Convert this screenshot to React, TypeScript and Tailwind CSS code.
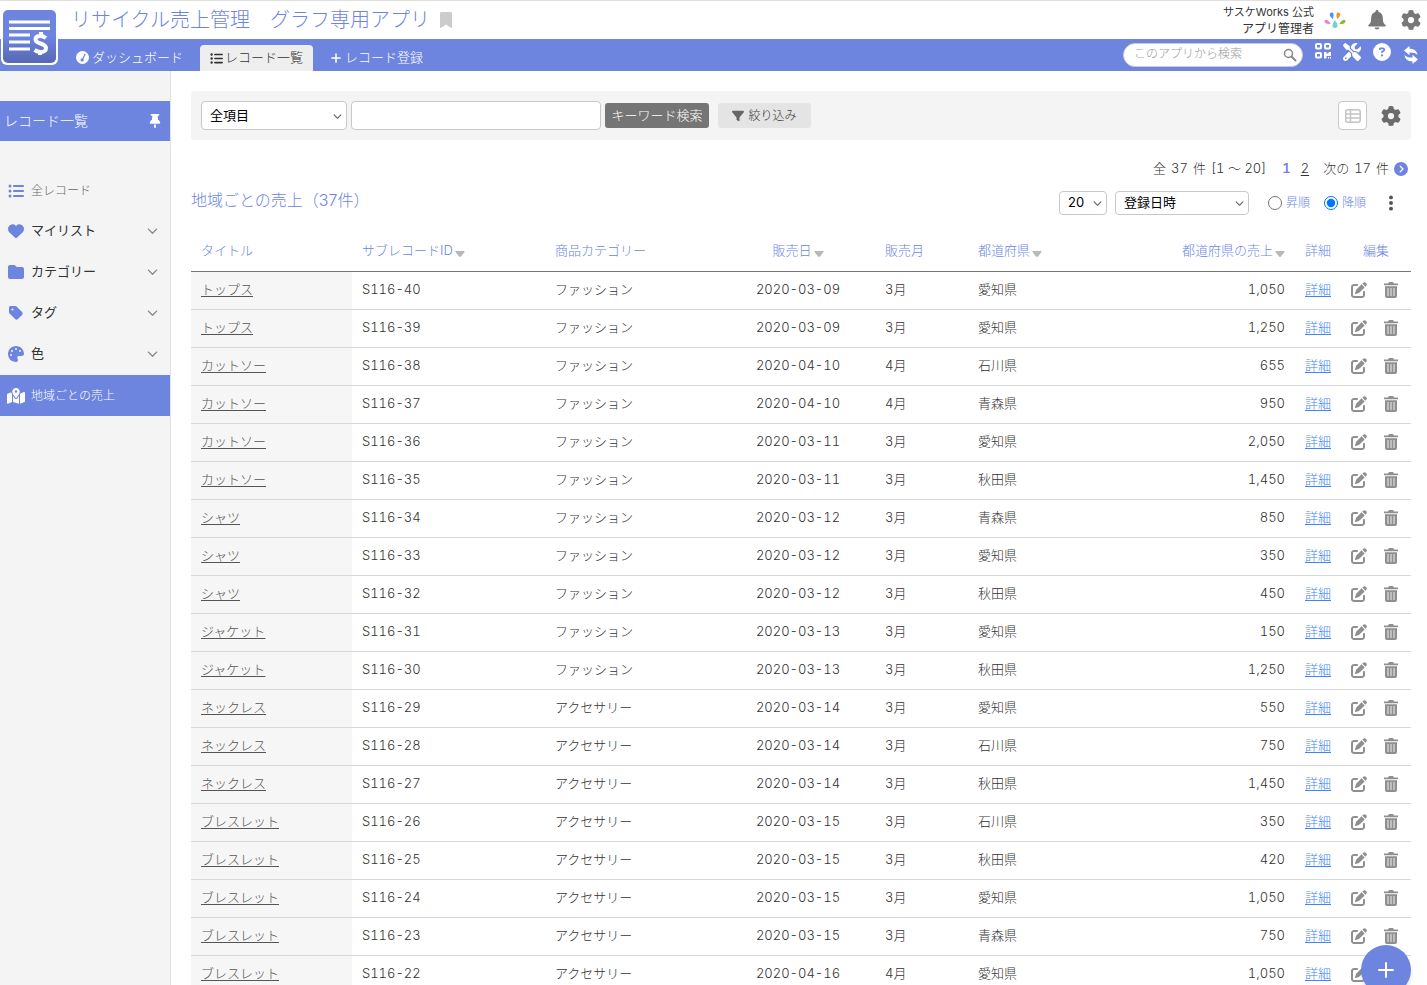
import type { ReactNode } from "react";
import {
  FaBookmark,
  FaChevronDown,
  FaCircleChevronRight,
  FaCircleQuestion,
  FaEllipsisVertical,
  FaFilter,
  FaFolder,
  FaGear,
  FaHeart,
  FaListUl,
  FaMapLocationDot,
  FaPalette,
  FaPenToSquare,
  FaPlus,
  FaScrewdriverWrench,
  FaTag,
  FaThumbtack,
} from "react-icons/fa6";

type RecordRow = [string, number, string, string, string, string, string];

const records: RecordRow[] = [
  ["トップス", 40, "ファッション", "2020-03-09", "3月", "愛知県", "1,050"],
  ["トップス", 39, "ファッション", "2020-03-09", "3月", "愛知県", "1,250"],
  ["カットソー", 38, "ファッション", "2020-04-10", "4月", "石川県", "655"],
  ["カットソー", 37, "ファッション", "2020-04-10", "4月", "青森県", "950"],
  ["カットソー", 36, "ファッション", "2020-03-11", "3月", "愛知県", "2,050"],
  ["カットソー", 35, "ファッション", "2020-03-11", "3月", "秋田県", "1,450"],
  ["シャツ", 34, "ファッション", "2020-03-12", "3月", "青森県", "850"],
  ["シャツ", 33, "ファッション", "2020-03-12", "3月", "愛知県", "350"],
  ["シャツ", 32, "ファッション", "2020-03-12", "3月", "秋田県", "450"],
  ["ジャケット", 31, "ファッション", "2020-03-13", "3月", "愛知県", "150"],
  ["ジャケット", 30, "ファッション", "2020-03-13", "3月", "秋田県", "1,250"],
  ["ネックレス", 29, "アクセサリー", "2020-03-14", "3月", "愛知県", "550"],
  ["ネックレス", 28, "アクセサリー", "2020-03-14", "3月", "石川県", "750"],
  ["ネックレス", 27, "アクセサリー", "2020-03-14", "3月", "秋田県", "1,450"],
  ["ブレスレット", 26, "アクセサリー", "2020-03-15", "3月", "石川県", "350"],
  ["ブレスレット", 25, "アクセサリー", "2020-03-15", "3月", "秋田県", "420"],
  ["ブレスレット", 24, "アクセサリー", "2020-03-15", "3月", "愛知県", "1,050"],
  ["ブレスレット", 23, "アクセサリー", "2020-03-15", "3月", "青森県", "750"],
  ["ブレスレット", 22, "アクセサリー", "2020-04-16", "4月", "愛知県", "1,050"],
];

const menu = [
  { label: "マイリスト", icon: FaHeart },
  { label: "カテゴリー", icon: FaFolder },
  { label: "タグ", icon: FaTag },
  { label: "色", icon: FaPalette },
];

const AppLogo = () => (
  <svg viewBox="0 0 53 53" className="size-full" aria-hidden="true">
    <defs>
      <linearGradient id="logo" x1="0" y1="0" x2="0" y2="1">
        <stop offset="0.5" stopColor="#6d85df" />
        <stop offset="1" stopColor="#5768b4" />
      </linearGradient>
    </defs>
    <rect width="53" height="53" rx="5" fill="url(#logo)" />
    <path
      d="M6 12h41M6 18.500h41M6 25h21M6 32h21M6 39h21"
      stroke="#fff"
      strokeWidth="3"
    />
    <path
      d="M43 28c-2-1.500-4-2-6-2-3 0-4.500 1.500-4.500 3.500 0 5 10.500 3 10.500 8.500 0 2.500-2 4-5 4-2.500 0-4.500-.7-6.500-2M38 22v4M37 42v3"
      fill="none"
      stroke="#fff"
      strokeWidth="4"
    />
  </svg>
);

const DashboardIcon = () => (
  <svg viewBox="0 0 16 16" className="size-[13px]" aria-hidden="true">
    <circle cx="8" cy="8" r="8" fill="#fff" />
    <path d="M8 10.500 11 4" stroke="#6d85df" strokeWidth="1.500" strokeLinecap="round" />
    <circle cx="7.500" cy="11" r="2" fill="#6d85df" />
  </svg>
);

const BellIcon = () => (
  <svg viewBox="0 0 20 20" className="size-5" fill="currentColor" aria-hidden="true">
    <path d="M10 0c.9 0 1.500.6 1.500 1.500v.4c2.700.6 4.300 2.800 4.300 5.600 0 4.500.9 6 2.700 7.500.5.400.3 1.500-.5 1.500H2c-.8 0-1-1.100-.5-1.500 1.800-1.500 2.700-3 2.700-7.500 0-2.800 1.600-5 4.300-5.600v-.4C8.500.6 9.100 0 10 0zM7.600 17.500h4.800a2.400 2 0 0 1-4.800 0z" />
  </svg>
);

const QrIcon = () => (
  <svg viewBox="0 0 16 16" className="size-4" aria-hidden="true">
    <g fill="none" stroke="#fff" strokeWidth="2">
      <rect x="1" y="1" width="5" height="4.500" rx="1" />
      <rect x="10" y="1" width="5" height="4.500" rx="1" />
      <rect x="1" y="10" width="5" height="4.500" rx="1" />
    </g>
    <path d="M9 9h2.500v1.500H13L14 9h2v4h-4.500v2.500H9zM13 14h1.200v1.500H13zM15 14h1v1.500h-1z" fill="#fff" />
  </svg>
);

const SyncIcon = () => (
  <svg viewBox="0 0 16 18" className="h-[18px] w-4" aria-hidden="true">
    <path
      d="M6.500 0v2.700c4.500 0 7.500 2 8 6.300-2-2-4.500-2.600-8-2.500v2.700L1 4.600zM9.500 18v-2.700c-4.500 0-7.500-2-8-6.300 2 2 4.500 2.600 8 2.500V8.800l5.500 4.600z"
      fill="#fff"
    />
  </svg>
);

const BrandMark = () => (
  <svg viewBox="0 0 22 16" className="h-4 w-[22px]" aria-hidden="true">
    <path d="M6 1.500C7 .2 9.200.3 9.500 2c.2 1.700-.2 3.500-.7 5C7.300 5.800 5 3.200 6 1.500z" fill="#4b8ff0" />
    <path d="M16 1.500C15 .2 12.800.3 12.500 2c-.2 1.700.2 3.500.7 5C14.700 5.800 17 3.200 16 1.500z" fill="#ef9a1e" />
    <path d="M.8 8.200C2 6.600 5 8.500 6.600 12c-2.400.6-7.200-.8-5.800-3.800z" fill="#e583cf" />
    <path d="M21.200 8.200C20 6.600 17 8.500 15.400 12c2.400.6 7.200-.8 5.800-3.800z" fill="#7fc02e" />
    <path d="M11 8c1.500 2.500 2.500 3.800 2.500 5.400a2.500 2.500 0 0 1-5 0C8.500 11.800 9.500 10.500 11 8z" fill="#74d3c9" />
  </svg>
);

const TrashIcon = () => (
  <svg viewBox="0 0 14 16" className="h-4 w-3.5" aria-hidden="true">
    <path d="M4 1.500 5 0h4l1 1.500h4v1.700H0V1.500zM1 4.300h12V14a2 2 0 0 1-2 2H3a2 2 0 0 1-2-2z" fill="#8f8f8f" />
    <path d="M4 6v8M7 6v8M10 6v8" stroke="#d0d0d0" strokeWidth="1.500" />
  </svg>
);

const ListTableIcon = () => (
  <svg viewBox="0 0 16 14" className="h-3.5 w-4" fill="none" stroke="#c4c4c4" strokeWidth="1.500" aria-hidden="true">
    <rect x="0.750" y="0.750" width="14.500" height="12.500" rx="2.500" />
    <path d="M1 5h14M1 9h14M5.500 1v12" />
  </svg>
);

const SortMark = () => (
  <svg viewBox="0 0 10 6" className="ml-0.5 inline-block h-1.5 w-2.5 align-[-2px]" aria-hidden="true">
    <path d="M1 0h8q1 0 .500 1L6 5.500q-1 .7-2 0L.500 1Q0 0 1 0z" fill="#b8b8b8" />
  </svg>
);

type SelectBoxProps = { label: string; value: string; className: string };

const SelectBox = ({ label, value, className }: SelectBoxProps) => (
  <div className={`relative ${className}`}>
    <select
      aria-label={label}
      className="size-full appearance-none rounded border border-[#c8c8c8] bg-white pl-2 text-[13px] font-normal text-black"
    >
      <option>{value}</option>
    </select>
    <FaChevronDown className="pointer-events-none absolute top-1/2 right-[5px] size-[9px] -translate-y-1/2 text-[#666]" />
  </div>
);

const Header = () => (
  <header className="relative shrink-0 border-t border-[#e0e0e0]">
    <div className="flex h-[38px] items-center pr-1.5 pl-[71px]">
      <h1 className="text-xl text-[#6d85df]">リサイクル売上管理　グラフ専用アプリ</h1>
      <button type="button" aria-label="ブックマーク" className="ml-2.5 text-[#ccc]">
        <FaBookmark className="h-4 w-3" />
      </button>
      <div className="ml-auto text-right leading-[17px] font-normal">
        <p className="text-[11px]">サスケWorks 公式</p>
        <p className="text-xs">アプリ管理者</p>
      </div>
      <div className="ml-2.5">
        <BrandMark />
      </div>
      <button type="button" aria-label="通知" className="ml-[21px] text-[#777]">
        <BellIcon />
      </button>
      <button type="button" aria-label="設定" className="ml-3.5 text-[#777]">
        <FaGear className="size-5" />
      </button>
    </div>

    <nav className="flex h-8 items-end bg-[#6d85df] pr-2 pl-[66px] text-[13px] text-white">
      <a href="#dashboard" className="flex h-[27px] items-center gap-[3px] px-2.5">
        <DashboardIcon />
        ダッシュボード
      </a>
      <a href="#records" className="ml-[7px] flex h-[26px] items-center gap-0.5 rounded-t bg-[#eee] px-2.5 text-[#333]">
        <FaListUl className="size-[13px]" />
        レコード一覧
      </a>
      <a href="#new" className="ml-[7px] flex h-[27px] items-center gap-[3px] px-2.5">
        <FaPlus className="size-3" />
        レコード登録
      </a>
      <div className="ml-auto flex items-start gap-3 self-start pt-1">
        <div className="relative">
          <input
            type="text"
            aria-label="このアプリから検索"
            placeholder="このアプリから検索"
            className="block h-6 w-[180px] rounded-full border border-[#ccc] bg-white pb-1 pl-2.5 text-xs text-black placeholder:text-[#999]"
          />
          <svg viewBox="0 0 14 14" className="absolute top-[5px] right-[6px] size-3.5" fill="none" stroke="#888" aria-hidden="true">
            <circle cx="5.500" cy="5.500" r="4" strokeWidth="1.500" />
            <path d="m8.500 8.500 4 4" strokeWidth="2" strokeLinecap="round" />
          </svg>
        </div>
        <button type="button" aria-label="QRコード">
          <QrIcon />
        </button>
        <button type="button" aria-label="ツール">
          <FaScrewdriverWrench className="size-[18px]" />
        </button>
        <button type="button" aria-label="ヘルプ">
          <FaCircleQuestion className="size-[18px]" />
        </button>
        <button type="button" aria-label="更新" className="mt-[3px]">
          <SyncIcon />
        </button>
      </div>
    </nav>

    <a href="#home" aria-label="ホーム" className="absolute top-[7px] left-px size-[57px] rounded-md bg-white p-0.5">
      <AppLogo />
    </a>
  </header>
);

const Sidebar = () => (
  <aside className="w-[171px] shrink-0 border-r border-[#e0e0e0] bg-[#f4f4f4] pt-[30px]">
    <div className="flex h-10 items-center justify-between bg-[#6d85df] pr-2 pl-1 text-sm text-white">
      レコード一覧
      <button type="button" aria-label="固定">
        <FaThumbtack className="h-3.5 w-3.5" />
      </button>
    </div>
    <ul className="mt-[29px] text-[13px]">
      <li>
        <a href="#all" className="flex h-[41px] items-center gap-[7px] pl-2 text-xs text-[#666]">
          <FaListUl className="size-4 text-[#6d85df]" />
          全レコード
        </a>
      </li>
      {menu.map(({ label, icon: Icon }) => (
        <li key={label}>
          <button type="button" className="flex h-[41px] w-full items-center gap-[7px] pr-3 pb-0.5 pl-2 font-normal">
            <Icon className="size-4 text-[#6d85df]" />
            {label}
            <FaChevronDown className="ml-auto size-[11px] text-[#888]" />
          </button>
        </li>
      ))}
      <li>
        <a href="#area" className="flex h-[41px] items-center gap-1.5 bg-[#6d85df] pl-[7px] text-xs text-white">
          <FaMapLocationDot className="size-[18px]" />
          地域ごとの売上
        </a>
      </li>
    </ul>
  </aside>
);

const SearchPanel = () => (
  <div className="flex h-[49px] items-center rounded bg-[#f4f4f4] px-2.5">
    <SelectBox label="検索項目" value="全項目" className="h-[29px] w-[146px]" />
    <input
      type="text"
      aria-label="キーワード"
      className="ml-1 h-[29px] w-[250px] rounded border border-[#c8c8c8] bg-white px-2 text-[13px]"
    />
    <button type="button" className="ml-1 h-[25px] w-[104px] rounded-[3px] bg-[#757575] text-[13px] text-white">
      キーワード検索
    </button>
    <button
      type="button"
      className="ml-[9px] flex h-[25px] w-[93px] items-center justify-center gap-1 rounded-[3px] bg-[#e4e4e4] text-xs"
    >
      <FaFilter className="size-3 text-[#666]" />
      絞り込み
    </button>
    <button
      type="button"
      aria-label="表示切替"
      className="ml-auto flex size-[29px] items-center justify-center rounded border border-[#c8c8c8] bg-white"
    >
      <ListTableIcon />
    </button>
    <button type="button" aria-label="一覧設定" className="ml-3.5 text-[#6b6b6b]">
      <FaGear className="size-5" />
    </button>
  </div>
);

type HeadCellProps = { children: ReactNode; sort?: boolean; className?: string };

const HeadCell = ({ children, sort, className = "px-2.5 text-left" }: HeadCellProps) => (
  <th scope="col" className={`h-[41px] font-light whitespace-nowrap ${className}`}>
    {children}
    {sort && <SortMark />}
  </th>
);

const RecordTable = () => (
  <table className="w-full table-fixed border-collapse text-[13px]">
    <colgroup>
      <col className="w-[161px]" />
      <col className="w-[193px]" />
      <col className="w-[176px]" />
      <col className="w-[154px]" />
      <col className="w-[93px]" />
      <col className="w-[203px]" />
      <col className="w-[124px]" />
      <col className="w-[46px]" />
      <col className="w-[70px]" />
    </colgroup>
    <thead>
      <tr className="border-b border-[#777] text-[#6d85df]">
        <HeadCell>タイトル</HeadCell>
        <HeadCell sort>サブレコードID</HeadCell>
        <HeadCell>商品カテゴリー</HeadCell>
        <HeadCell sort className="text-center">販売日</HeadCell>
        <HeadCell>販売月</HeadCell>
        <HeadCell sort>都道府県</HeadCell>
        <HeadCell sort className="pr-2.5 text-right">都道府県の売上</HeadCell>
        <HeadCell>詳細</HeadCell>
        <HeadCell className="text-center">編集</HeadCell>
      </tr>
    </thead>
    <tbody className="tabular-nums">
      {records.map(([title, id, category, date, month, area, amount]) => (
        <tr key={id} className="h-[38px] border-b border-[#d8d8d8]">
          <td className="bg-[#f6f6f6] px-2.5">
            <a href={`#record-${id}`} className="text-[#555] underline underline-offset-2">{title}</a>
          </td>
          <td className="px-2.5">S116-{id}</td>
          <td className="px-2.5">{category}</td>
          <td className="text-center">{date}</td>
          <td className="px-2.5">{month}</td>
          <td className="px-2.5">{area}</td>
          <td className="px-2.5 text-right">{amount}</td>
          <td className="px-2.5 whitespace-nowrap">
            <a href={`#detail-${id}`} className="text-[#3f83f5] underline underline-offset-2">詳細</a>
          </td>
          <td>
            <div className="flex items-center gap-[17px] pl-2.5 text-[#8f8f8f]">
              <button type="button" aria-label={`S116-${id}を編集`}>
                <FaPenToSquare className="size-4" />
              </button>
              <button type="button" aria-label={`S116-${id}を削除`}>
                <TrashIcon />
              </button>
            </div>
          </td>
        </tr>
      ))}
    </tbody>
  </table>
);

export default function App() {
  return (
    <div className="flex h-screen flex-col overflow-hidden bg-white font-[Inter,'Noto_Sans_CJK_JP',sans-serif] font-light text-[#333]">
      <Header />
      <div className="flex min-h-0 flex-1">
        <Sidebar />
        <main className="min-w-0 flex-1 overflow-y-auto pt-5 pr-4 pl-5 [scrollbar-width:none]">
          <SearchPanel />

          <div className="mt-[19px] flex h-5 items-center justify-end pr-[3px] text-[13px] tabular-nums">
            <p className="flex gap-[5px]">
              <span>全</span>
              <span>37</span>
              <span>件</span>
              <span>[1 ～ 20]</span>
            </p>
            <span className="ml-4 font-semibold text-[#6d85df]">1</span>
            <a href="#page-2" className="ml-2.5 underline underline-offset-2">2</a>
            <a href="#next" className="ml-3.5 flex items-center gap-[5px]">
              <span>次の</span>
              <span>17</span>
              <span>件</span>
              <FaCircleChevronRight className="size-3.5 text-[#6d85df]" />
            </a>
          </div>

          <div className="mt-[11px] flex h-[26px] items-center text-xs">
            <h2 className="self-start text-base leading-5 text-[#6d85df]">地域ごとの売上（37件）</h2>
            <SelectBox label="表示件数" value="20" className="ml-auto h-6 w-12" />
            <SelectBox label="並び替え項目" value="登録日時" className="ml-2 h-6 w-[134px]" />
            <label className="ml-[19px] flex items-center gap-1 text-[#6d85df]">
              <input type="radio" name="order" className="size-3.5" />
              昇順
            </label>
            <label className="ml-3.5 flex items-center gap-1 text-[#6d85df]">
              <input type="radio" name="order" defaultChecked className="size-3.5" />
              降順
            </label>
            <button type="button" aria-label="その他" className="mr-3 ml-[17px] text-[#555]">
              <FaEllipsisVertical className="h-[18px] w-4" />
            </button>
          </div>

          <div className="mt-3.5">
            <RecordTable />
          </div>
        </main>
      </div>

      <button
        type="button"
        aria-label="レコードを追加"
        className="fixed right-4 -bottom-2.5 flex size-[50px] items-center justify-center rounded-full bg-[#6d85df] text-white shadow-md"
      >
        <svg viewBox="0 0 16 16" className="size-4" stroke="currentColor" strokeWidth="2" strokeLinecap="round" aria-hidden="true">
          <path d="M8 1v14M1 8h14" />
        </svg>
      </button>
    </div>
  );
}
